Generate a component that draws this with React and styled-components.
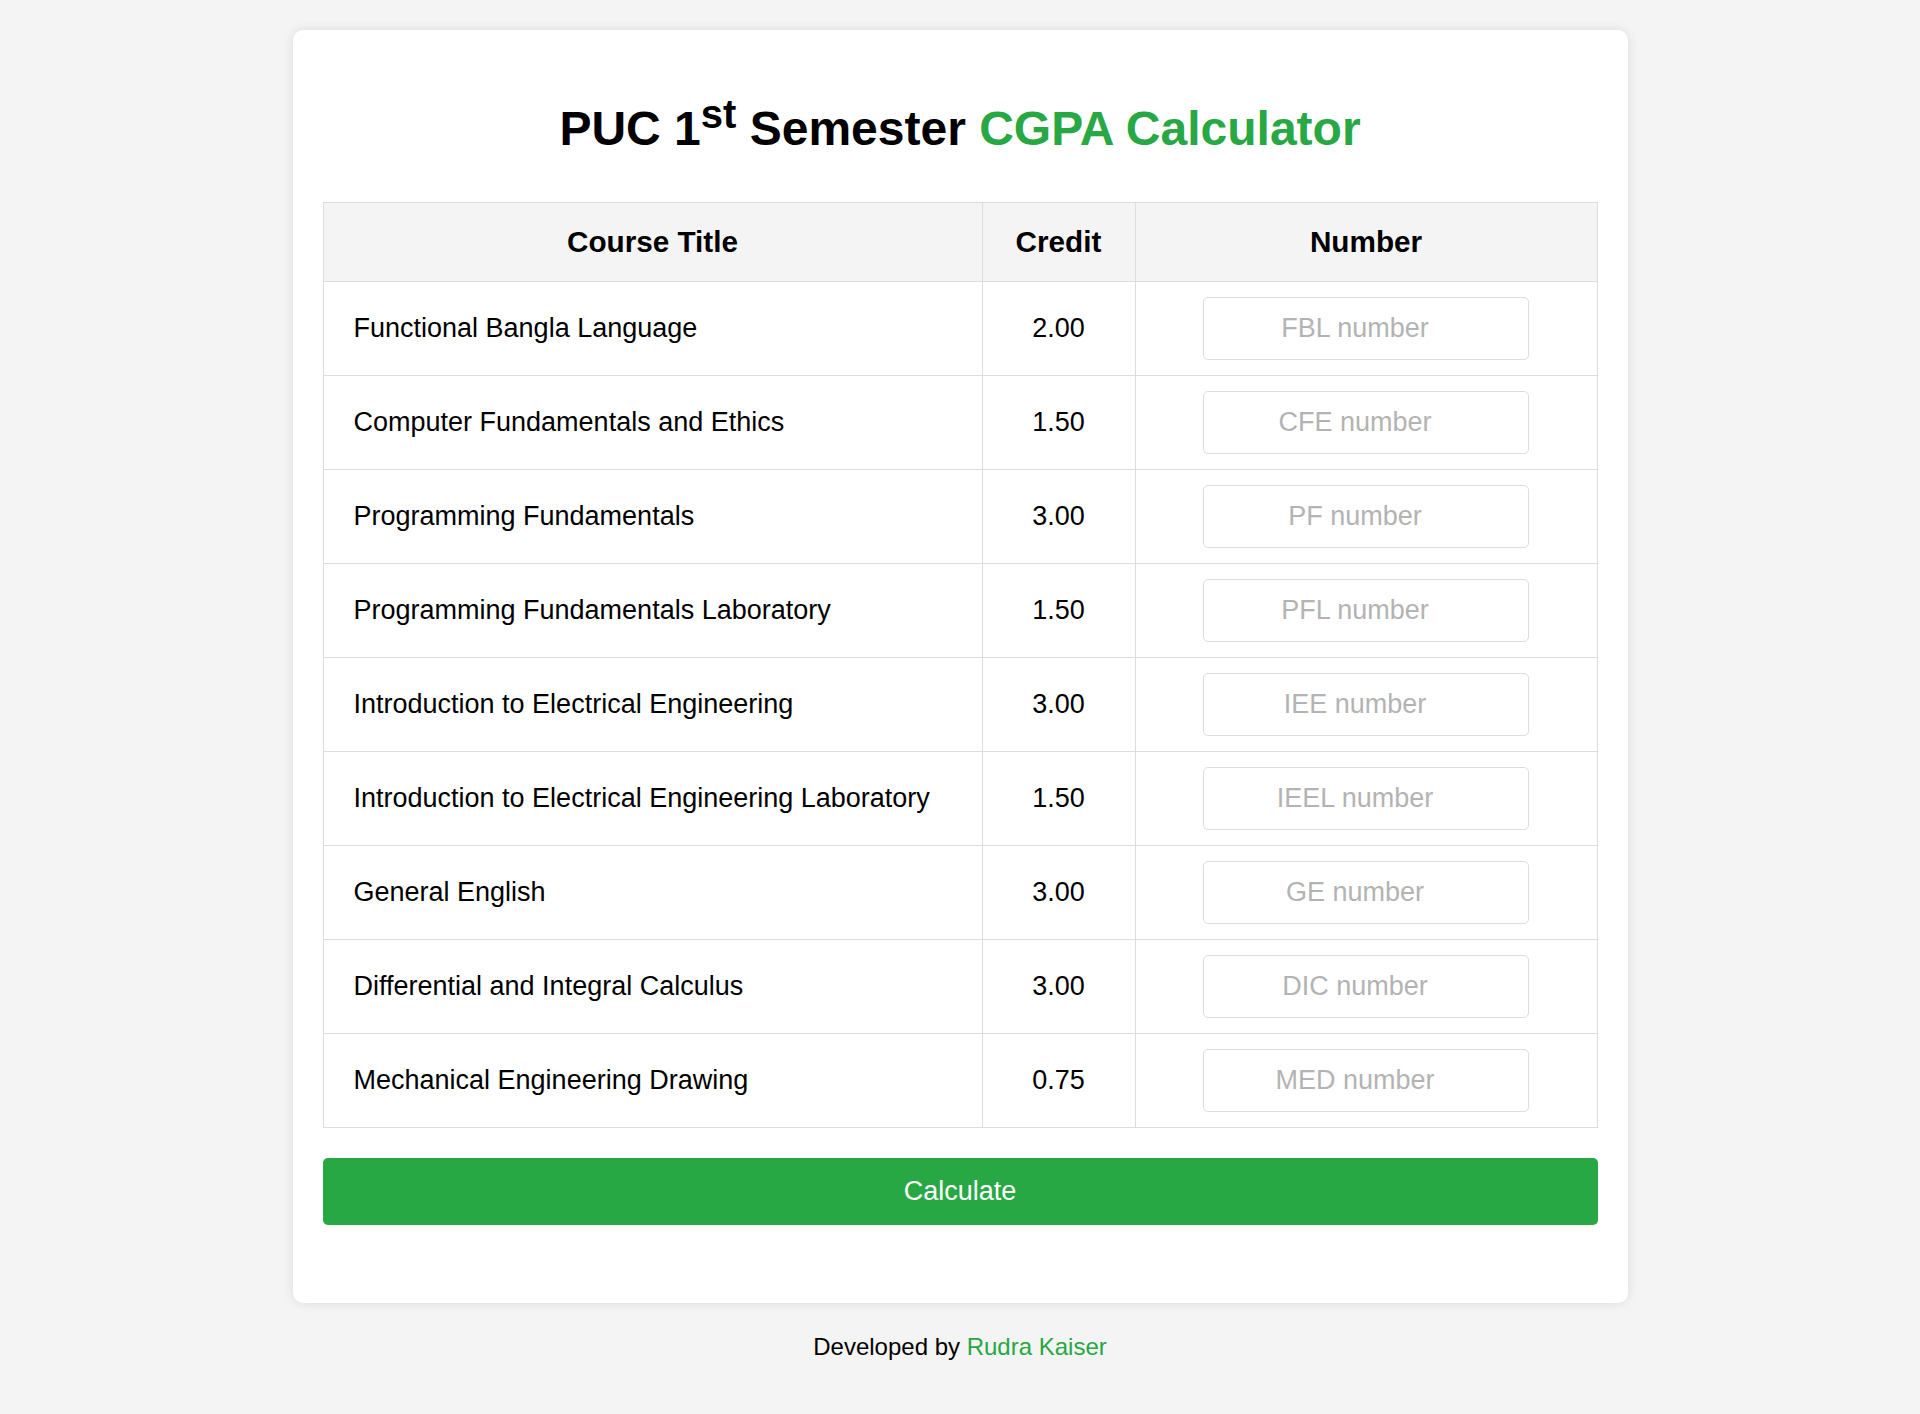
import React, { useState } from "react";
import styled, { createGlobalStyle } from "styled-components";

const courses = [
  { title: "Functional Bangla Language", credit: 2.0, code: "FBL" },
  { title: "Computer Fundamentals and Ethics", credit: 1.5, code: "CFE" },
  { title: "Programming Fundamentals", credit: 3.0, code: "PF" },
  { title: "Programming Fundamentals Laboratory", credit: 1.5, code: "PFL" },
  { title: "Introduction to Electrical Engineering", credit: 3.0, code: "IEE" },
  { title: "Introduction to Electrical Engineering Laboratory", credit: 1.5, code: "IEEL" },
  { title: "General English", credit: 3.0, code: "GE" },
  { title: "Differential and Integral Calculus", credit: 3.0, code: "DIC" },
  { title: "Mechanical Engineering Drawing", credit: 0.75, code: "MED" },
];

// nota -> punto segun la escala de la universidad
const toPoint = (n) => {
  if (n >= 80) return 4.0;
  if (n >= 75) return 3.75;
  if (n >= 70) return 3.5;
  if (n >= 65) return 3.25;
  if (n >= 60) return 3.0;
  if (n >= 55) return 2.75;
  if (n >= 50) return 2.5;
  if (n >= 45) return 2.25;
  if (n >= 40) return 2.0;
  return 0;
};

export default function App() {
  const [marks, setMarks] = useState({});
  const [result, setResult] = useState("");

  const calculate = () => {
    let total = 0;
    let credits = 0;
    courses.forEach((c) => {
      const v = parseFloat(marks[c.code]);
      if (!isNaN(v)) {
        total += toPoint(v) * c.credit;
        credits += c.credit;
      }
    });
    setResult(credits ? `Your CGPA: ${(total / credits).toFixed(2)}` : "");
  };

  return (
    <>
      <GlobalStyle />
      <Card>
        <Title>
          PUC 1<sup>st</sup> Semester <Green>CGPA Calculator</Green>
        </Title>
        <Table>
          <thead>
            <tr>
              <Th width="659px">Course Title</Th>
              <Th width="153px">Credit</Th>
              <Th width="462px">Number</Th>
            </tr>
          </thead>
          <tbody>
            {courses.map((c) => (
              <tr key={c.code}>
                <Td>{c.title}</Td>
                <Td center>{c.credit.toFixed(2)}</Td>
                <Td center>
                  <NumberInput
                    type="number"
                    placeholder={`${c.code} number`}
                    value={marks[c.code] || ""}
                    onChange={(e) => setMarks({ ...marks, [c.code]: e.target.value })}
                  />
                </Td>
              </tr>
            ))}
          </tbody>
        </Table>
        <Button onClick={calculate}>Calculate</Button>
        <Result>{result}</Result>
      </Card>
      <Footer>
        Developed by <FooterLink href="#">Rudra Kaiser</FooterLink>
      </Footer>
    </>
  );
}

const GlobalStyle = createGlobalStyle`
  html, body {
    margin: 0;
    padding: 0;
    background-color: #f4f4f4;
  }
  body {
    font-family: "Liberation Sans", Arial, sans-serif;
    font-size: 27px;
    color: #000;
    min-height: 1414px;
  }
`;

const Card = styled.div`
  width: 1335px;
  box-sizing: border-box;
  margin: 30px auto 0;
  padding: 30px;
  background-color: #fff;
  border-radius: 10px;
  box-shadow: 0 0 12px rgba(0, 0, 0, 0.1);
`;

const Title = styled.h1`
  font-size: 48px;
  font-weight: bold;
  text-align: center;
  margin: 32px 0 46px;
`;

const Green = styled.span`
  color: #28a745;
`;

const Table = styled.table`
  width: 100%;
  border-collapse: collapse;
  table-layout: fixed;
`;

const Th = styled.th`
  box-sizing: border-box;
  width: ${(p) => p.width};
  background-color: #f4f4f4;
  border: 1px solid #ddd;
  padding: 22px 15px;
  font-size: 29.7px;
  font-weight: bold;
  text-align: center;
`;

const Td = styled.td`
  border: 1px solid #ddd;
  padding: ${(p) => (p.center ? "15px" : "15px 30px")};
  text-align: ${(p) => (p.center ? "center" : "left")};
  vertical-align: middle;
`;

const NumberInput = styled.input`
  width: 326px;
  height: 63px;
  box-sizing: border-box;
  padding: 0 14px 0 7px;
  border: 1px solid #ddd;
  border-radius: 5px;
  font-family: inherit;
  font-size: 27px;
  text-align: center;
  outline: none;
  &::placeholder {
    color: #b3b3b3;
  }
`;

const Button = styled.button`
  display: block;
  width: 100%;
  margin-top: 30px;
  padding: 18px;
  border: none;
  border-radius: 5px;
  background-color: #28a745;
  color: #fff;
  font-family: inherit;
  font-size: 27px;
  cursor: pointer;
`;

const Result = styled.div`
  margin-top: 20px;
  min-height: 28px;
  text-align: center;
  font-weight: bold;
`;

const Footer = styled.footer`
  margin-top: 30px;
  text-align: center;
  font-size: 24px;
`;

const FooterLink = styled.a`
  color: #28a745;
  text-decoration: none;
`;
